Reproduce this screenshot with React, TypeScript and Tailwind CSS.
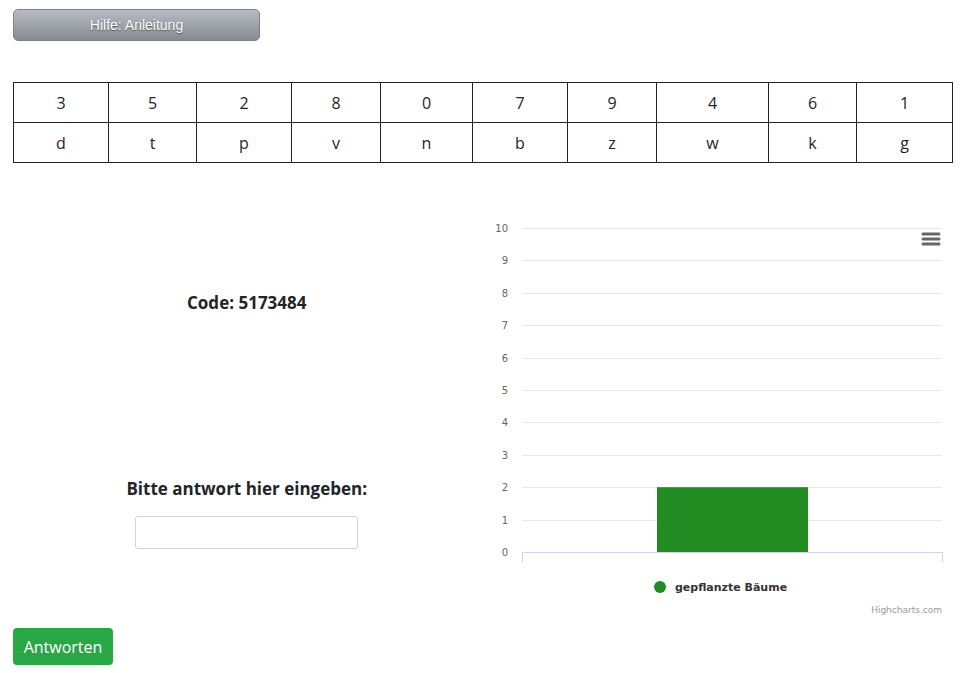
import React from 'react';

const top = ['3', '5', '2', '8', '0', '7', '9', '4', '6', '1'];
const bottom = ['d', 't', 'p', 'v', 'n', 'b', 'z', 'w', 'k', 'g'];
const widths = [95, 88, 95, 89, 92, 95, 89, 112, 88, 96];

function Chart() {
  const y = (v: number) => 339 - 32.4 * v;
  const ticks = [0, 1, 2, 3, 4, 5, 6, 7, 8, 9, 10];
  return (
    <svg width="471" height="410" className="block" style={{ fontFamily: '"DejaVu Sans", sans-serif' }}>
      {ticks.map((t) => (
        <g key={t}>
          {t > 0 && <line x1="41" x2="461" y1={Math.round(y(t)) + 0.5} y2={Math.round(y(t)) + 0.5} stroke="#e6e6e6" />}
          <text x="27" y={y(t) + 4} textAnchor="end" fontSize="10" fill="#666">
            {t}
          </text>
        </g>
      ))}
      <rect x="176" y={y(2)} width="151" height={32.4 * 2} fill="#228b22" />
      <line x1="41" x2="461" y1="339.5" y2="339.5" stroke="#ccd6eb" />
      <line x1="41.5" x2="41.5" y1="339" y2="349" stroke="#ccd6eb" />
      <line x1="461.5" x2="461.5" y1="339" y2="349" stroke="#ccd6eb" />
      <g stroke="#666" strokeWidth="3" strokeLinecap="round">
        <line x1="442" x2="458" y1="21" y2="21" />
        <line x1="442" x2="458" y1="26" y2="26" />
        <line x1="442" x2="458" y1="31" y2="31" />
      </g>
      <circle cx="179" cy="374" r="6" fill="#228b22" />
      <text x="194" y="378" fontSize="11" fontWeight="bold" fill="#333">
        gepflanzte Bäume
      </text>
      <text x="461" y="400" textAnchor="end" fontSize="9" fill="#999">
        Highcharts.com
      </text>
    </svg>
  );
}

export default function App() {
  return (
    <main className="min-h-screen w-full bg-white px-[13px] text-[#212529]" style={{ fontFamily: '"Open Sans", "Noto Sans", sans-serif' }}>
      <button
        className="mt-[9px] block h-[32px] w-[247px] rounded-[5px] border border-[#7d8189] bg-gradient-to-b from-[#b8bbc2] to-[#868b93] text-[14px] text-white [text-shadow:0_1px_1px_#555]"
        style={{ fontFamily: '"Liberation Sans", Arial, sans-serif' }}
      >
        Hilfe: Anleitung
      </button>

      <table className="mt-[41px] w-[939px] table-fixed border-collapse text-[16px]">
        <colgroup>
          {widths.map((w, i) => (
            <col key={i} style={{ width: w }} />
          ))}
        </colgroup>
        <tbody>
          {[top, bottom].map((row, r) => (
            <tr key={r} className="h-[40px]">
              {row.map((c, i) => (
                <td key={i} className="border border-[#222] p-0 text-center align-middle">
                  {c}
                </td>
              ))}
            </tr>
          ))}
        </tbody>
      </table>

      <div className="mt-[50px] grid grid-cols-2">
        <div className="flex flex-col items-center">
          <h3 className="mt-[78px] text-[17px] leading-6 font-bold">Code: 5173484</h3>
          <h3 className="mt-[162px] text-[17px] leading-6 font-bold">Bitte antwort hier eingeben:</h3>
          <input type="text" className="mt-[15px] h-[33px] w-[223px] rounded-[3px] border border-[#ced4da] bg-white outline-none" />
        </div>
        <div>
          <Chart />
        </div>
      </div>

      <button className="mt-[5px] h-[37px] w-[100px] rounded-[4px] bg-[#28a745] text-[16px] text-white">Antworten</button>
    </main>
  );
}
